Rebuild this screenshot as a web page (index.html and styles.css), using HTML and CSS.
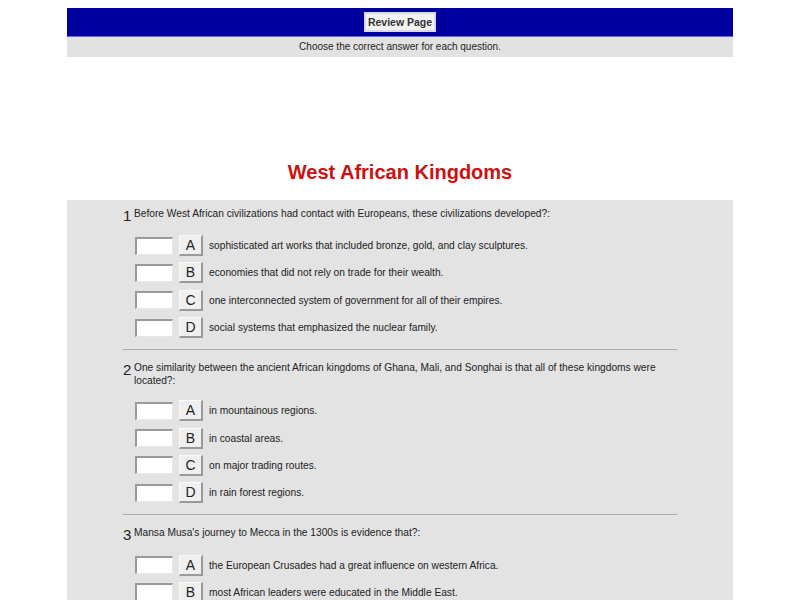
FILE: index.html
```html
<!DOCTYPE html>
<html lang="en">
<head>
  <meta charset="UTF-8">
  <title>West African Kingdoms</title>
  <link rel="stylesheet" href="styles.css">
</head>
<body>
  <div class="page">
    <div class="topbar">
      <button class="review">Review Page</button>
    </div>
    <div class="instructions">Choose the correct answer for each question.</div>

    <h1>West African Kingdoms</h1>

    <div class="quiz">
      <div class="question">
        <div class="q-head">
          <span class="q-num">1</span>
          <span class="q-text">Before West African civilizations had contact with Europeans, these civilizations developed?:</span>
        </div>
        <div class="options">
          <div class="option"><input type="text" class="answer"><span class="letter">A</span><span class="opt-text">sophisticated art works that included bronze, gold, and clay sculptures.</span></div>
          <div class="option"><input type="text" class="answer"><span class="letter">B</span><span class="opt-text">economies that did not rely on trade for their wealth.</span></div>
          <div class="option"><input type="text" class="answer"><span class="letter">C</span><span class="opt-text">one interconnected system of government for all of their empires.</span></div>
          <div class="option"><input type="text" class="answer"><span class="letter">D</span><span class="opt-text">social systems that emphasized the nuclear family.</span></div>
        </div>
      </div>

      <div class="question">
        <div class="q-head">
          <span class="q-num">2</span>
          <span class="q-text">One similarity between the ancient African kingdoms of Ghana, Mali, and Songhai is that all of these kingdoms were located?:</span>
        </div>
        <div class="options">
          <div class="option"><input type="text" class="answer"><span class="letter">A</span><span class="opt-text">in mountainous regions.</span></div>
          <div class="option"><input type="text" class="answer"><span class="letter">B</span><span class="opt-text">in coastal areas.</span></div>
          <div class="option"><input type="text" class="answer"><span class="letter">C</span><span class="opt-text">on major trading routes.</span></div>
          <div class="option"><input type="text" class="answer"><span class="letter">D</span><span class="opt-text">in rain forest regions.</span></div>
        </div>
      </div>

      <div class="question">
        <div class="q-head">
          <span class="q-num">3</span>
          <span class="q-text">Mansa Musa's journey to Mecca in the 1300s is evidence that?:</span>
        </div>
        <div class="options">
          <div class="option"><input type="text" class="answer"><span class="letter">A</span><span class="opt-text">the European Crusades had a great influence on western Africa.</span></div>
          <div class="option"><input type="text" class="answer"><span class="letter">B</span><span class="opt-text">most African leaders were educated in the Middle East.</span></div>
          <div class="option"><input type="text" class="answer"><span class="letter">C</span><span class="opt-text">the Mali Empire was wealthy and powerful.</span></div>
          <div class="option"><input type="text" class="answer"><span class="letter">D</span><span class="opt-text">most of western Africa was ruled by foreign leaders.</span></div>
        </div>
      </div>
    </div>
  </div>
</body>
</html>
```

FILE: styles.css
```css
body {
  margin: 0;
  padding-top: 8px;
  background: #fff;
  font-family: "Liberation Sans", Arial, sans-serif;
  color: #222;
}
.page {
  width: 666px;
  margin: 0 auto;
}
.topbar {
  background-color: #00009e;
  height: 29px;
  display: flex;
  align-items: center;
  justify-content: center;
  border-bottom: 1px solid #6a6ad0;
  box-sizing: border-box;
}
.review {
  font-family: "Liberation Sans", Arial, sans-serif;
  font-size: 10.5px;
  font-weight: bold;
  color: #333;
  background-color: #f2f2f2;
  border: 2px solid #d8d8e8;
  padding: 2px 2px;
  height: 20px;
  cursor: pointer;
}
.instructions {
  background-color: #e2e2e2;
  height: 20px;
  line-height: 20px;
  font-size: 10px;
  text-align: center;
}
h1 {
  margin: 102px 0 15px;
  line-height: 26px;
  font-size: 20px;
  text-align: center;
  color: #cc1111;
}
.quiz {
  background-color: #e3e3e3;
  padding: 0 56px;
}
.question {
  padding: 7px 0 8px;
  border-bottom: 1px solid #aaa;
}
.question + .question {
  padding-top: 11px;
}
.q-head {
  display: flex;
  align-items: flex-start;
}
.q-num {
  font-size: 15px;
  line-height: 13px;
  margin-top: 2px;
  width: 11px;
  flex-shrink: 0;
}
.q-text {
  font-size: 10.2px;
  line-height: 13px;
}
.options {
  margin-top: 10px;
  padding-left: 12px;
}
.option {
  display: flex;
  align-items: center;
  height: 27.3px;
}
.answer {
  width: 38px;
  height: 18px;
  box-sizing: border-box;
  padding: 0;
  background: #fff;
  border-top: 2px solid #9a9a9a;
  border-left: 2px solid #9a9a9a;
  border-right: 1px solid #e8e8e8;
  border-bottom: 1px solid #e8e8e8;
  margin: 0 6px 0 0;
}
.letter {
  width: 24px;
  height: 21px;
  box-sizing: border-box;
  display: flex;
  align-items: center;
  justify-content: center;
  font-size: 14px;
  background-color: #efefef;
  border-top: 1px solid #fafafa;
  border-left: 1px solid #fafafa;
  border-right: 2px solid #999;
  border-bottom: 2px solid #999;
  margin-right: 6px;
}
.opt-text {
  font-size: 10.2px;
}
```
